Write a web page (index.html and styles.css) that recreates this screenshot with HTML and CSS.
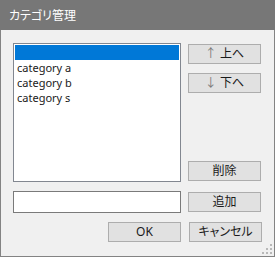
FILE: index.html
```html
<!DOCTYPE html>
<html lang="ja">
<head>
  <meta charset="UTF-8">
  <title>カテゴリ管理</title>
  <link rel="stylesheet" href="styles.css">
</head>
<body>
  <div class="dialog">
    <div class="titlebar">カテゴリ管理</div>

    <div class="content">
      <!-- category list + move/delete buttons -->
      <div class="list-row">
        <ul class="listbox">
          <li class="selected">&nbsp;</li>
          <li>category a</li>
          <li>category b</li>
          <li>category s</li>
        </ul>
        <div class="side">
          <button class="btn"><span class="arrow">↑</span> 上へ</button>
          <button class="btn"><span class="arrow">↓</span> 下へ</button>
          <div class="spacer"></div>
          <button class="btn">削除</button>
        </div>
      </div>

      <!-- new category -->
      <div class="add-row">
        <input type="text" class="textbox">
        <button class="btn">追加</button>
      </div>

      <div class="footer">
        <button class="btn">OK</button>
        <button class="btn">キャンセル</button>
      </div>
    </div>

    <svg class="grip" width="10" height="10" viewBox="0 0 10 10">
      <rect x="8" y="0" width="2" height="2" fill="#b8b8b8"/>
      <rect x="4" y="4" width="2" height="2" fill="#b8b8b8"/>
      <rect x="8" y="4" width="2" height="2" fill="#b8b8b8"/>
      <rect x="0" y="8" width="2" height="2" fill="#b8b8b8"/>
      <rect x="4" y="8" width="2" height="2" fill="#b8b8b8"/>
      <rect x="8" y="8" width="2" height="2" fill="#b8b8b8"/>
    </svg>
  </div>
</body>
</html>
```

FILE: styles.css
```css
/* Dialog window */
body {
  margin: 0;
  font-family: "Noto Sans", "Noto Sans CJK JP", sans-serif;
  font-size: 12px;
  color: #000;
}
.dialog {
  position: relative;
  width: 275px;
  height: 257px;
  box-sizing: border-box;
  background: #f0f0f0;
  border: 1px solid #838383;
  border-top: none;
}
.titlebar {
  height: 30px;
  line-height: 30px;
  margin: 0 -1px;
  padding-left: 9px;
  background: #777777;
  color: #fff;
  font-family: "Noto Sans CJK JP", sans-serif;
  font-size: 12px;
  font-feature-settings: "palt";
}
.content {
  padding: 13px 12px 0 12px;
}

/* List */
.list-row {
  display: flex;
  gap: 7px;
  height: 139px;
}
.listbox {
  width: 168px;
  margin: 0;
  padding: 1px;
  list-style: none;
  box-sizing: border-box;
  background: #fff;
  border: 1px solid #828790;
  font-size: 11px;
}
.listbox li {
  height: 15px;
  line-height: 15px;
  padding-left: 2px;
  white-space: nowrap;
  color: #1a1a1a;
}
.listbox li.selected {
  background: #0078d7;
}
.side {
  display: flex;
  flex-direction: column;
  gap: 9px;
  padding: 1px 0;
}
.spacer {
  flex: 1;
}

/* Buttons */
.btn {
  width: 73px;
  height: 20px;
  padding: 0;
  box-sizing: border-box;
  background: #e1e1e1;
  border: 1px solid #adadad;
  font-family: "Noto Sans", "Noto Sans CJK JP", sans-serif;
  font-size: 12px;
  font-feature-settings: "palt";
  line-height: 16px;
  color: #1a1a1a;
}
.arrow {
  color: #7a7a7a;
}

/* Add row */
.add-row {
  display: flex;
  align-items: center;
  gap: 7px;
  margin-top: 9px;
}
.textbox {
  width: 168px;
  height: 22px;
  margin: 0;
  box-sizing: border-box;
  background: #fff;
  border: 1px solid #7a7a7a;
}
.footer {
  display: flex;
  justify-content: flex-end;
  gap: 8px;
  margin-top: 9px;
}
.grip {
  position: absolute;
  right: 2px;
  bottom: 2px;
}
```
